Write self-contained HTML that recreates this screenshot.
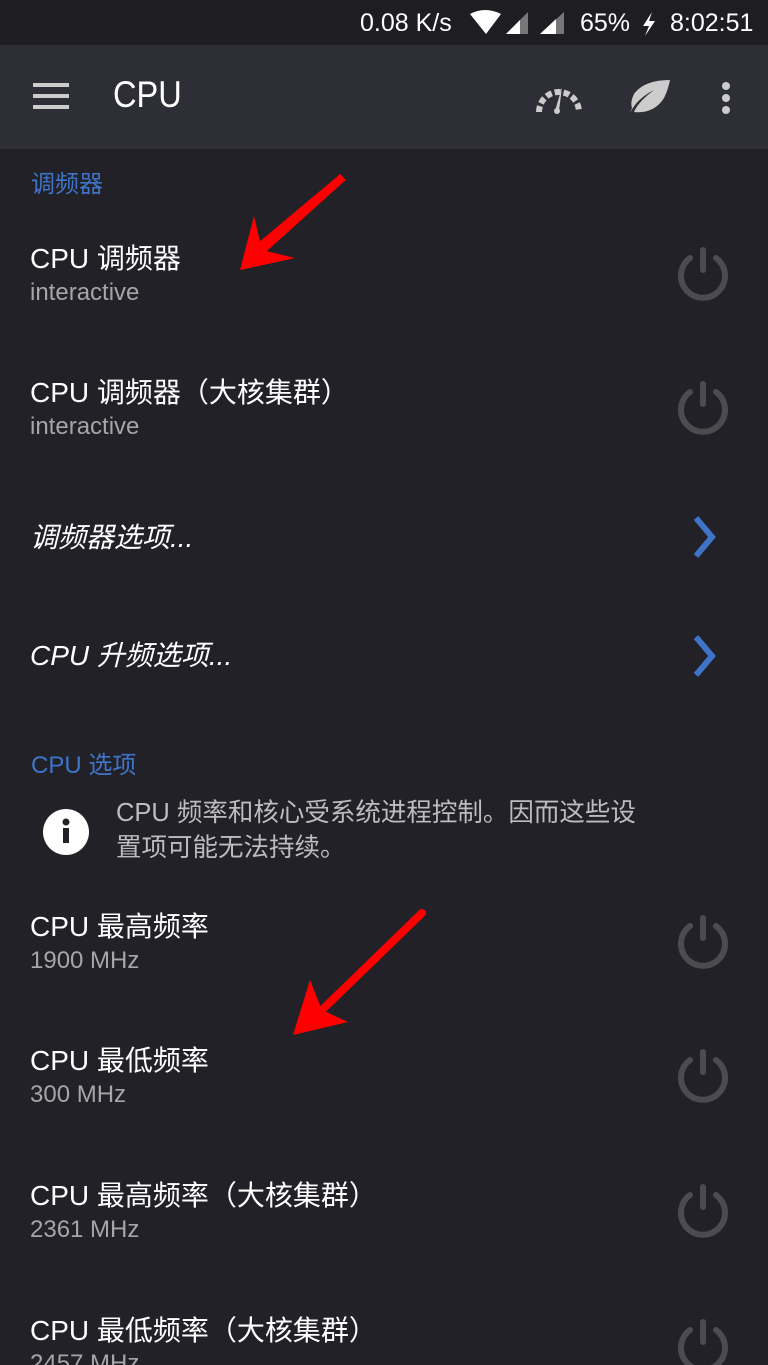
<!DOCTYPE html>
<html><head><meta charset="utf-8"><style>
html,body{margin:0;width:768px;height:1365px;overflow:hidden}
body{background:#212127;font-family:"Liberation Sans","Noto Sans CJK SC",sans-serif;position:relative}
.sb{position:absolute;left:0;top:0;width:768px;height:45px;background:#1d1d22;color:#fff;font-size:25px}
.tb{position:absolute;left:0;top:45px;width:768px;height:104px;background:#2e2e37}
.t{position:absolute;white-space:nowrap}
.ti{color:#fff;font-size:28px;left:30px}
.su{color:#a6a6a8;font-size:24px;left:30px}
.hd{color:#3f74c8;font-size:24px;left:31px}
.it{font-style:italic}
</style></head><body>
<div class="sb">
<span class="t" style="left:360px;top:9px">0.08 K/s</span>
<svg class="t" style="left:468px;top:10px" width="36" height="26"><path d="M2 4 Q17 -4 33 4 L18 24 Z" fill="#fff"/></svg>
<svg class="t" style="left:504px;top:10px" width="28" height="26"><path d="M2 24 L24 2 L24 24 Z" fill="#777"/><path d="M2 24 L16 10 L16 24 Z" fill="#fff"/></svg>
<svg class="t" style="left:538px;top:10px" width="28" height="26"><path d="M2 24 L26 2 L26 24 Z" fill="#777"/><path d="M2 24 L18 9 L18 24 Z" fill="#fff"/></svg>
<span class="t" style="left:580px;top:9px">65%</span>
<svg class="t" style="left:640px;top:12px" width="18" height="24"><path d="M12 0 L3 14 L9 14 L5 24 L15 9 L9 9 Z" fill="#fff"/></svg>
<span class="t" style="left:670px;top:9px">8:02:51</span>
</div>
<div class="tb">
<svg class="t" style="left:33px;top:38px" width="38" height="28"><rect y="0" width="36" height="4" fill="#ccc"/><rect y="11" width="36" height="4" fill="#ccc"/><rect y="22" width="36" height="4" fill="#ccc"/></svg>
<span class="t" style="left:113px;top:29px;color:#fff;font-size:37px;transform:scaleX(0.88);transform-origin:left">CPU</span>
<svg class="t" style="left:534px;top:34px" width="50" height="40"><path d="M5 33 A20 20 0 0 1 45 33" stroke="#ccc" stroke-width="6" fill="none" stroke-dasharray="6 3"/><path d="M21 32 L28 8 L25 32 Z" fill="#ccc"/><circle cx="23" cy="32" r="3" fill="#ccc"/></svg>
<svg class="t" style="left:624px;top:33px" width="48" height="42"><path d="M4 40 Q10 22 30 12 Q14 24 10 34 Q30 36 40 20 Q44 12 46 2 Q20 2 10 16 Q6 24 8 30 Z" fill="#ccc"/></svg>
<svg class="t" style="left:719px;top:36px" width="14" height="36"><circle cx="7" cy="5" r="4" fill="#ccc"/><circle cx="7" cy="17" r="4" fill="#ccc"/><circle cx="7" cy="29" r="4" fill="#ccc"/></svg>
</div>
<span class="t hd" style="top:164px">调频器</span>
<span class="t ti" style="top:237px">CPU 调频器</span>
<span class="t su" style="top:279px">interactive</span>
<span class="t ti" style="top:371px">CPU 调频器（大核集群）</span>
<span class="t su" style="top:413px">interactive</span>
<span class="t ti it" style="top:516px">调频器选项...</span>
<span class="t ti it" style="top:634px">CPU 升频选项...</span>
<span class="t hd" style="top:745px">CPU 选项</span>
<svg class="t" style="left:42px;top:808px" width="48" height="48"><circle cx="24" cy="24" r="23" fill="#fff"/><circle cx="24" cy="14" r="3.5" fill="#212127"/><rect x="21" y="20" width="6" height="15" fill="#212127"/></svg>
<span class="t" style="left:116px;top:796px;color:#bdbdbf;font-size:25.5px;line-height:35px">CPU 频率和核心受系统进程控制。因而这些设<br>置项可能无法持续。</span>
<span class="t ti" style="top:905px">CPU 最高频率</span>
<span class="t su" style="top:947px">1900 MHz</span>
<span class="t ti" style="top:1039px">CPU 最低频率</span>
<span class="t su" style="top:1081px">300 MHz</span>
<span class="t ti" style="top:1174px">CPU 最高频率（大核集群）</span>
<span class="t su" style="top:1216px">2361 MHz</span>
<span class="t ti" style="top:1309px">CPU 最低频率（大核集群）</span>
<span class="t su" style="top:1350px">2457 MHz</span>
<svg class="t" style="left:0;top:0" width="768" height="1365">
<g fill="none" stroke="#4b4b50" stroke-width="6" stroke-linecap="round">
<path d="M690 258 A22 22 0 1 0 716 258"/><path d="M703 250 L703 270"/>
<path d="M690 392 A22 22 0 1 0 716 392"/><path d="M703 384 L703 404"/>
<path d="M690 926 A22 22 0 1 0 716 926"/><path d="M703 918 L703 938"/>
<path d="M690 1060 A22 22 0 1 0 716 1060"/><path d="M703 1052 L703 1072"/>
<path d="M690 1195 A22 22 0 1 0 716 1195"/><path d="M703 1187 L703 1207"/>
<path d="M690 1330 A22 22 0 1 0 716 1330"/><path d="M703 1322 L703 1342"/>
</g>
<g fill="none" stroke="#3f74c8" stroke-width="6"><path d="M696 518 L712 537 L696 556"/><path d="M696 637 L712 656 L696 675"/></g>
<g fill="#f00"><path d="M343 177 L262 250 L257 249 Z" stroke="#f00" stroke-width="8" stroke-linecap="round"/><path d="M240 270 L254 216 L262 250 L295 258 Z"/>
<path d="M422 913 L322 1010" stroke="#f00" stroke-width="8" stroke-linecap="round"/><path d="M293 1035 L310 980 L322 1010 L348 1022 Z"/></g>
</svg>
</body></html>
